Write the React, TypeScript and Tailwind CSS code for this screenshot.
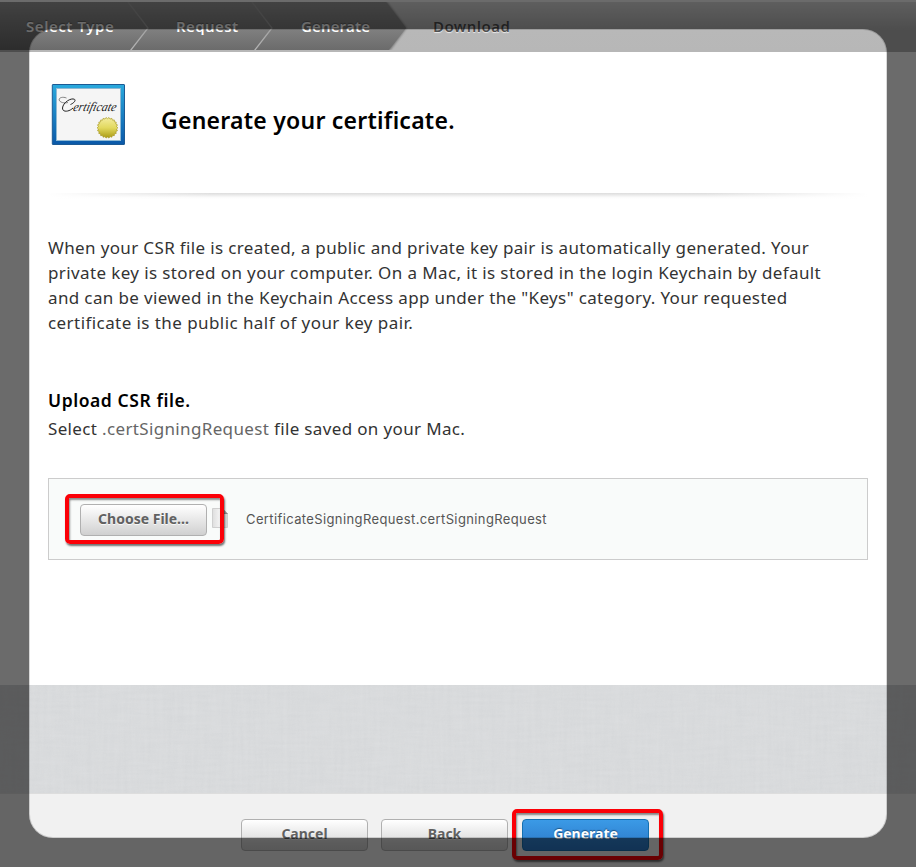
const lines: { text: string; tracking: string }[] = [
  { text: "When your CSR file is created, a public and private key pair is automatically generated. Your", tracking: "tracking-[0.36px]" },
  { text: "private key is stored on your computer. On a Mac, it is stored in the login Keychain by default", tracking: "tracking-[0.385px]" },
  { text: "and can be viewed in the Keychain Access app under the \"Keys\" category. Your requested", tracking: "tracking-[0.36px]" },
  { text: "certificate is the public half of your key pair.", tracking: "tracking-[0.43px]" },
];

function Steps() {
  const done = "text-white [text-shadow:0_-1px_1px_rgba(0,0,0,0.3)]";
  return (
    <header className="relative mt-[2px] h-[50px] bg-[linear-gradient(#e0e0e0,#b8b8b8_56%,#b7b7b7)]">
      <svg className="absolute left-0 top-0 h-[50px] w-[460px]" viewBox="0 0 460 50">
        <defs>
          <linearGradient id="bar" x1="0" y1="0" x2="0" y2="1">
            <stop offset="0" stopColor="#9d9d9d" />
            <stop offset="0.5" stopColor="#838383" />
            <stop offset="1" stopColor="#6b6b6b" />
          </linearGradient>
          <linearGradient id="sep" gradientUnits="userSpaceOnUse" x1="0" y1="0" x2="0" y2="48">
            <stop offset="0" stopColor="#fff" stopOpacity="0.08" />
            <stop offset="0.5" stopColor="#fff" stopOpacity="0.25" />
            <stop offset="1" stopColor="#fff" stopOpacity="0.5" />
          </linearGradient>
          <filter id="soft" x="-10%" y="-10%" width="120%" height="120%">
            <feGaussianBlur stdDeviation="1.2" />
          </filter>
          <clipPath id="barclip"><rect width="460" height="48" /></clipPath>
        </defs>
        <g clipPath="url(#barclip)">
          <path d="M340 0H387L406.500 26L390.500 48H340Z" fill="#000" opacity="0.35" filter="url(#soft)" />
          <path d="M0 0H386L406 26L389 48H0Z" fill="url(#bar)" />
          <path d="M128 0L148 26L130.500 48.500M252 0L272 26L254.500 48.500" fill="none" stroke="url(#sep)" strokeWidth="1.300" />
        </g>
      </svg>
      <nav className="relative flex pl-[26px] pt-[14px] text-[15px]/[20px] font-semibold">
        <span className={"w-[150px] tracking-[0.55px] " + done}>Select Type</span>
        <span className={"w-[125px] tracking-[0.4px] " + done}>Request</span>
        <span className={"w-[132px] tracking-[0.15px] " + done}>Generate</span>
        <span className="tracking-[0.45px] text-[#505050] [text-shadow:0_1px_1px_rgba(255,255,255,0.75)]">Download</span>
      </nav>
    </header>
  );
}

function CertificateIcon() {
  const seal = Array.from({ length: 44 }, (_, i) => {
    const r = i % 2 ? 9.1 : 10.4;
    const a = (i * Math.PI) / 22;
    return `${56.5 + r * Math.cos(a)},${44.8 + r * Math.sin(a)}`;
  }).join(" ");
  return (
    <svg className="h-[63px] w-[75px] shrink-0" viewBox="0 0 75 63">
      <defs>
        <linearGradient id="frame" x1="0" y1="0" x2="0" y2="1">
          <stop offset="0" stopColor="#2aa9dd" />
          <stop offset="1" stopColor="#0a58a8" />
        </linearGradient>
        <linearGradient id="gold" x1="0" y1="0" x2="0" y2="1">
          <stop offset="0" stopColor="#f4eda0" />
          <stop offset="0.5" stopColor="#e2d95e" />
          <stop offset="1" stopColor="#aa9a12" />
        </linearGradient>
      </defs>
      <rect x="1.300" y="1.500" width="72.200" height="60" rx="0.500" fill="url(#frame)" stroke="#1c5a94" />
      <rect x="5.500" y="5.500" width="64" height="52" fill="#f5f5f5" stroke="#8fb9d3" />
      <path d="M17 19.500C13 20.500 9 19.500 8.200 17C7.700 14.500 12 13.500 15.500 15" fill="none" stroke="#666" strokeWidth="0.800" />
      <path d="M19.500 21.500C23 20 25 17.500 23.500 16.300C20 14.500 12 19.500 11.500 25C11.300 29.500 18 29 22 25" fill="none" stroke="#222" strokeWidth="1" />
      <g transform="translate(21.500 28) skewX(-14)">
        <text x="0" y="0" textLength="43" lengthAdjust="spacingAndGlyphs" fontFamily="'Liberation Serif', serif" fontStyle="italic" fontSize="13" fill="#222">ertificate</text>
      </g>
      <polygon points={seal} fill="url(#gold)" stroke="#a99a22" strokeWidth="0.700" />
    </svg>
  );
}

function Linen() {
  return (
    <svg className="block h-[108px] w-full" aria-hidden="true">
      <filter id="linen-h" x="0" y="0" width="100%" height="100%">
        <feTurbulence type="fractalNoise" baseFrequency="0.03 0.3" numOctaves="2" seed="4" />
        <feColorMatrix values="0 0 0 0 1  0 0 0 0 1  0 0 0 0 1  0.7 0 0 0 -0.15" />
      </filter>
      <filter id="linen-v" x="0" y="0" width="100%" height="100%">
        <feTurbulence type="fractalNoise" baseFrequency="0.25 0.02" numOctaves="2" seed="9" />
        <feColorMatrix values="0 0 0 0 1  0 0 0 0 1  0 0 0 0 1  0.7 0 0 0 -0.15" />
      </filter>
      <rect width="100%" height="108" fill="#d6d8da" />
      <rect width="100%" height="108" filter="url(#linen-h)" opacity="0.17" />
      <rect width="100%" height="108" filter="url(#linen-v)" opacity="0.17" />
    </svg>
  );
}

const button = "flex h-[32px] w-[127px] shrink-0 justify-center rounded-[4px] border pt-[4px] text-[14px]/[19px] font-bold";
const grey = "border-[#b0b0b0] bg-[linear-gradient(#ffffff,#d0d0d0)] text-[#616161] [text-shadow:0_1px_0_rgba(255,255,255,0.8)]";
const marker = "absolute rounded-[5px] border-4 border-[#fb0007] shadow-[1px_2px_2px_rgba(0,0,0,0.55),inset_1px_2px_2px_rgba(0,0,0,0.45)]";

export default function App() {
  return (
    <div className="relative h-[867px] w-[916px] overflow-hidden bg-white font-['Noto_Sans',sans-serif]">
      <div className="flex h-full flex-col">
        <Steps />
        <main className="h-[633px] px-[48px]">
          <div className="flex items-start pl-[3px] pt-[31px]">
            <CertificateIcon />
            <h1 className="ml-[35px] mt-[21px] whitespace-nowrap text-[23px]/[32px] font-semibold tracking-[0.24px] text-black">
              Generate your certificate.
            </h1>
          </div>
          <div className="mt-[47px] h-[6px] bg-[linear-gradient(90deg,#fff,transparent_20%,transparent_80%,#fff),linear-gradient(#dcdcdc,#fafafa_70%,#fff)]" />
          <div className="mt-[36px] text-[17px]/[25px] text-[#333333]">
            {lines.map((l) => (
              <p key={l.text} className={"whitespace-nowrap " + l.tracking}>{l.text}</p>
            ))}
          </div>
          <h2 className="mt-[51px] text-[17.5px]/[28px] font-semibold tracking-[0.57px] text-black">Upload CSR file.</h2>
          <p className="text-[17px]/[30px] tracking-[0.35px] text-[#333333]">
            Select <span className="text-[#666666]">.certSigningRequest</span> file saved on your Mac.
          </p>
          <div className="mt-[34px] flex h-[82px] w-[820px] border border-[#cccccc] bg-[#f9fbfa] pt-[16px]">
            <div className="relative ml-[16px] flex h-[50px] w-[163px] items-center">
              <button className={"ml-[15px] " + button + " " + grey}>Choose File...</button>
              <svg className="ml-[5px] h-[20px] w-[16px] shrink-0 -translate-y-[2px]" viewBox="0 0 16 20">
                <defs>
                  <linearGradient id="doc" x1="0" y1="0" x2="1" y2="0">
                    <stop offset="0" stopColor="#dedede" />
                    <stop offset="0.5" stopColor="#f4f4f4" />
                    <stop offset="1" stopColor="#d4d4d4" />
                  </linearGradient>
                </defs>
                <path d="M0.500 0.500H10.500L15.500 5.500V19.500H0.500Z" fill="url(#doc)" stroke="#cfcfcf" />
                <path d="M10.500 0.500V5.500H15.500" fill="#999" stroke="#888" />
              </svg>
              <div className={marker + " -top-px left-0 h-[50px] w-[159px]"} />
            </div>
            <span className="ml-[18px] font-['Inter',sans-serif] text-[13px]/[49px] tracking-[0.38px] text-[#555555]">
              CertificateSigningRequest.certSigningRequest
            </span>
          </div>
        </main>
        <Linen />
        <footer className="flex flex-1 border-t border-[#dddddd] bg-[#f1f1f1] pl-[241px] pt-[25px]">
          <button className={button + " " + grey}>Cancel</button>
          <button className={"ml-[13px] " + button + " " + grey}>Back</button>
          <div className="relative ml-[14px] h-[32px]">
            <button className={button + " border-[#1470b0] bg-[linear-gradient(#3b9ae6,#2b78c8)] text-white [text-shadow:0_-1px_1px_rgba(0,0,0,0.4)]"}>Generate</button>
            <div className={marker + " -left-[10px] -top-[10px] h-[51px] w-[151px]"} />
          </div>
        </footer>
      </div>
      <div className="pointer-events-none absolute left-[29px] top-[29px] h-[809px] w-[858px] rounded-[24px] border border-black/15 shadow-[0_0_0_200px_rgba(0,0,0,0.58)]" />
    </div>
  );
}
